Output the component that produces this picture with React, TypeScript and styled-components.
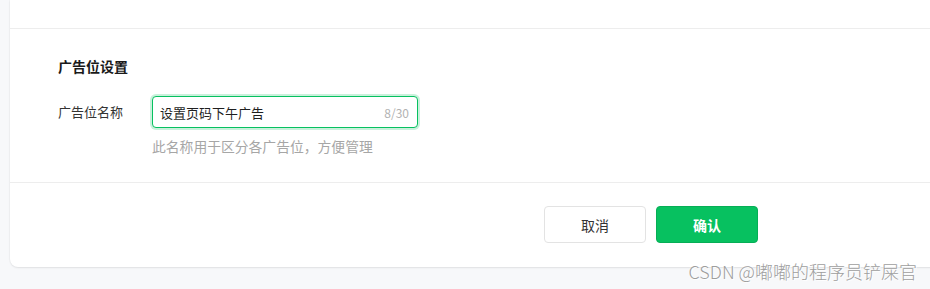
import React from "react";
import styled, { createGlobalStyle } from "styled-components";

const GlobalStyle = createGlobalStyle`
  html, body {
    margin: 0;
    padding: 0;
    overflow: hidden;
    background: #f7f8fa;
    font-family: "Noto Sans CJK SC", "Noto Sans", sans-serif;
  }
  * { box-sizing: border-box; }
`;

const Page = styled.div`
  position: relative;
  width: 930px;
  height: 289px;
  padding: 0 0 21px 10px;
  overflow: hidden;
`;

const Card = styled.div`
  width: 1282px;
  background: #fff;
  border-radius: 0 0 8px 8px;
  box-shadow: 0 1px 2px rgba(0, 0, 0, 0.08), 0 0 0 1px rgba(0, 0, 0, 0.02);
`;

const TopSection = styled.div`
  height: 29px;
  border-bottom: 1px solid #ededed;
`;

const FormSection = styled.section`
  padding: 27px 0 26px 48px;
  border-bottom: 1px solid #ededed;
`;

const SectionTitle = styled.h3`
  margin: 0;
  font-size: 14px;
  line-height: 20px;
  font-weight: 700;
  color: #1a1a1a;
`;

const FormRow = styled.div`
  display: flex;
  align-items: flex-start;
  margin-top: 20px;
`;

const Label = styled.label`
  width: 94px;
  flex: none;
  font-size: 13px;
  line-height: 32px;
  color: #333;
`;

const Field = styled.div`
  display: flex;
  flex-direction: column;
`;

const InputBox = styled.div`
  display: flex;
  align-items: center;
  width: 266px;
  height: 32px;
  padding: 0 8px 0 7px;
  border: 1px solid #07c160;
  border-radius: 4px;
  box-shadow: 0 0 0 2px rgba(7, 193, 96, 0.22);
  background: #fff;
`;

const TextInput = styled.input`
  flex: 1;
  min-width: 0;
  border: none;
  outline: none;
  padding: 0;
  font-family: inherit;
  font-size: 13px;
  color: #1f1f1f;
  background: transparent;
`;

const Counter = styled.span`
  font-size: 12px;
  color: #b2b2b2;
`;

const Hint = styled.div`
  margin-top: 8px;
  font-size: 13.8px;
  line-height: 20px;
  color: #a6a6a6;
`;

const Footer = styled.div`
  display: flex;
  justify-content: center;
  gap: 10px;
  padding: 23px 0 24px;
`;

const Button = styled.button<{ $primary?: boolean }>`
  width: 102px;
  height: 37px;
  border-radius: 4px;
  font-family: inherit;
  font-size: 14px;
  cursor: pointer;
  border: 1px solid ${(p) => (p.$primary ? "#06ae56" : "#e3e3e3")};
  background: ${(p) => (p.$primary ? "#07c160" : "#fff")};
  color: ${(p) => (p.$primary ? "#fff" : "#333")};
  font-weight: ${(p) => (p.$primary ? 700 : 400)};
`;

const Watermark = styled.div`
  position: absolute;
  right: 13px;
  bottom: 6px;
  font-size: 18px;
  line-height: 24px;
  color: #9e9e9e;
  font-weight: 300;
  text-shadow: 0 0 2px #fff, 1px 1px 1px #fff;
  white-space: nowrap;
`;

export default function App() {
  return (
    <>
      <GlobalStyle />
      <Page>
        <Card>
          <TopSection />
          <FormSection>
            <SectionTitle>广告位设置</SectionTitle>
            <FormRow>
              <Label>广告位名称</Label>
              <Field>
                <InputBox>
                  <TextInput defaultValue="设置页码下午广告" readOnly />
                  <Counter>8/30</Counter>
                </InputBox>
                <Hint>此名称用于区分各广告位，方便管理</Hint>
              </Field>
            </FormRow>
          </FormSection>
          <Footer>
            <Button>取消</Button>
            <Button $primary>确认</Button>
          </Footer>
        </Card>
        <Watermark>CSDN @嘟嘟的程序员铲屎官</Watermark>
      </Page>
    </>
  );
}
